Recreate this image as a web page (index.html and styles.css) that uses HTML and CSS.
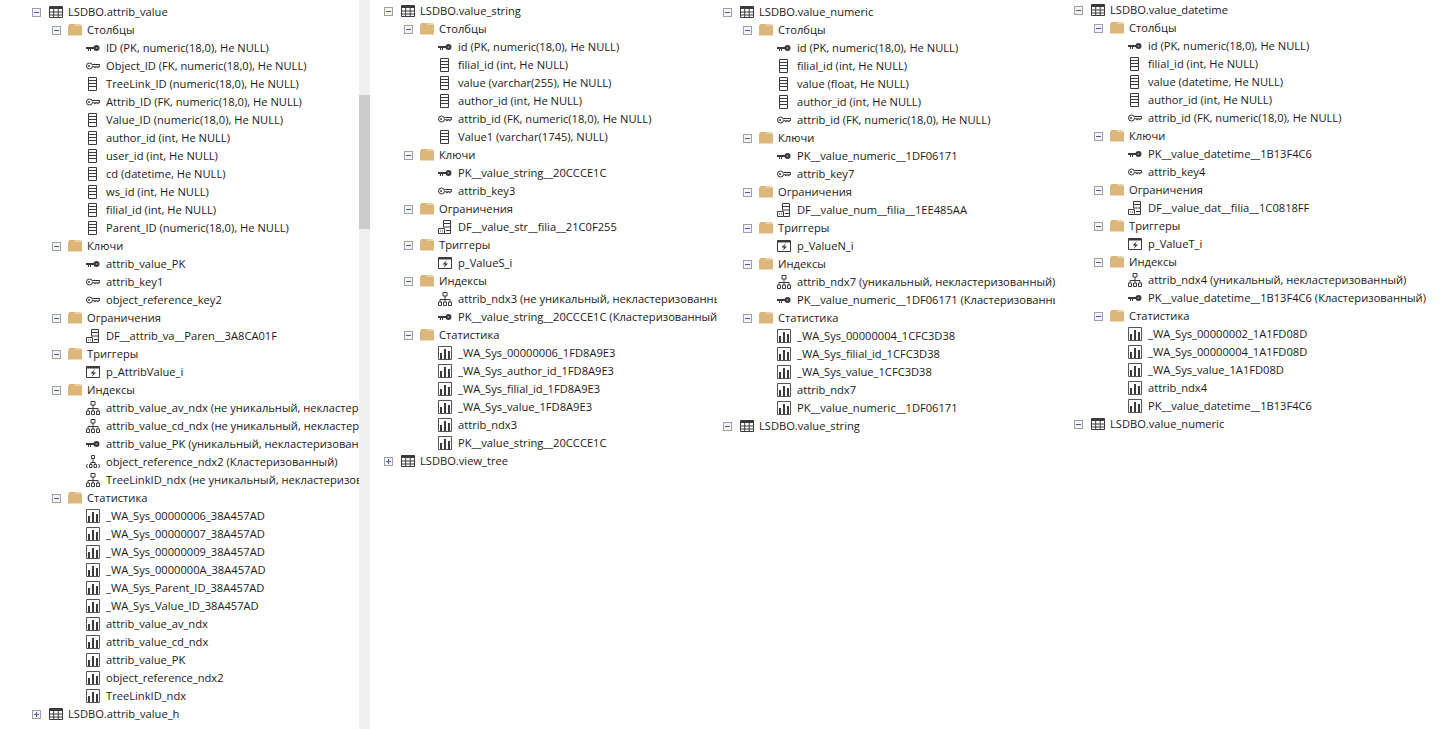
FILE: index.html
```html
<!DOCTYPE html>
<html lang="ru">
<head>
<meta charset="utf-8">
<title>Object Explorer</title>
<link rel="stylesheet" href="styles.css">
</head>
<body>
<svg class="sprite" width="0" height="0" aria-hidden="true">
  <symbol id="table" viewBox="0 0 14 14"><path d="M.5 1.5h13v11H.5z" fill="#fff" stroke="#3a3a3a"/><path d="M1 1h12v3H1z" fill="#3a3a3a"/><path d="M.5 7h13M.5 10h13M4.7 4v8M9.2 4v8" stroke="#3a3a3a" fill="none"/></symbol>
  <symbol id="folder" viewBox="0 0 14 14"><path d="M0 2.5h1V1h6v1.500h7V12.500H0z" fill="#dcb67a"/><path d="M7 1h6v1.500H7z" fill="#e9cf9f"/></symbol>
  <symbol id="pk" viewBox="0 0 14 14"><path d="M0 6h8v2H5v2H4V8H3v2H2V8H0z" fill="#3a3a3a"/><circle cx="10.500" cy="7" r="3" fill="#3a3a3a"/><circle cx="10.500" cy="7" r="1" fill="#8a8a8a"/></symbol>
  <symbol id="fk" viewBox="0 0 14 14"><circle cx="3.500" cy="7" r="3" fill="#fff" stroke="#2e2e2e"/><circle cx="3" cy="7" r=".9" fill="#2e2e2e"/><path d="M6.500 5.500h7.200v2.200h-1.500v1h-1v-1H9.500v1h-1v-1h-2" fill="#fff" stroke="#2e2e2e"/></symbol>
  <symbol id="col" viewBox="0 0 14 14"><path d="M2.500 .5h8v13h-8z" fill="#fff" stroke="#3a3a3a"/><path d="M3 3.500h7M3 6.500h7M3 9.500h7" stroke="#3a3a3a" fill="none"/></symbol>
  <symbol id="con" viewBox="0 0 14 14"><path d="M5.500 .5h7v13H7" fill="#fff" stroke="#3a3a3a"/><path d="M5.500 .5v7M6 3.500h6M6 7h6M8 10.500h4" stroke="#3a3a3a" fill="none"/><path d="M.5 8.500h6v5h-6z" fill="#fff" stroke="#3a3a3a"/><path d="M2 10.500h1v1H2zM4 10.500h1v1H4z" fill="#3a3a3a"/></symbol>
  <symbol id="trg" viewBox="0 0 14 14"><path d="M.5 1.500h13v11H.5z" fill="#fff" stroke="#3a3a3a"/><path d="M1 1h12v2.500H1z" fill="#3a3a3a"/><path d="M9 4 4.500 8.500h2.800L5.500 12 10 7.500H7.200z" fill="#2e2e2e"/></symbol>
  <symbol id="idx" viewBox="0 0 14 14"><path d="M5 .5h4v3.500H5zM.5 10h3v3.500h-3zM5.500 10h3v3.500h-3zM10.500 10h3v3.500h-3z" fill="#fff" stroke="#3a3a3a"/><path d="M7 4v6M2 10V7.500h10V10" stroke="#3a3a3a" fill="none"/></symbol>
  <symbol id="cidx" viewBox="0 0 14 14"><path d="M5.500 .5h3v3h-3zM3.500 9.500h2.500v3H3.500zM8 9.500h2.500v3H8z" fill="#fff" stroke="#3a3a3a"/><path d="M7 3.500v4M4.800 9.500V7.500h4.400v2" stroke="#3a3a3a" fill="none"/><path d="M1.500 9c-1.200 1.300-1.200 2.700 0 4M12.500 9c1.200 1.300 1.200 2.700 0 4" stroke="#3a3a3a" fill="none"/></symbol>
  <symbol id="stat" viewBox="0 0 14 14"><path d="M.5 .5h13v13H.5z" fill="#fff" stroke="#555"/><path d="M2 7h2v6H2zM6 3h2v10H6zM10 5h2v8h-2z" fill="#3a3a3a"/></symbol>
</svg>

<main class="explorer">
<section class="pane pane-a">
  <div class="tree">
    <div class="row l1"><i class="exp minus"></i><svg class="ico"><use href="#table"/></svg><span>LSDBO.attrib_value</span></div>
    <div class="row l2"><i class="exp minus"></i><svg class="ico"><use href="#folder"/></svg><span>Столбцы</span></div>
    <div class="row l3"><svg class="ico"><use href="#pk"/></svg><span>ID (PK, numeric(18,0), Не NULL)</span></div>
    <div class="row l3"><svg class="ico"><use href="#fk"/></svg><span>Object_ID (FK, numeric(18,0), Не NULL)</span></div>
    <div class="row l3"><svg class="ico"><use href="#col"/></svg><span>TreeLink_ID (numeric(18,0), Не NULL)</span></div>
    <div class="row l3"><svg class="ico"><use href="#fk"/></svg><span>Attrib_ID (FK, numeric(18,0), Не NULL)</span></div>
    <div class="row l3"><svg class="ico"><use href="#col"/></svg><span>Value_ID (numeric(18,0), Не NULL)</span></div>
    <div class="row l3"><svg class="ico"><use href="#col"/></svg><span>author_id (int, Не NULL)</span></div>
    <div class="row l3"><svg class="ico"><use href="#col"/></svg><span>user_id (int, Не NULL)</span></div>
    <div class="row l3"><svg class="ico"><use href="#col"/></svg><span>cd (datetime, Не NULL)</span></div>
    <div class="row l3"><svg class="ico"><use href="#col"/></svg><span>ws_id (int, Не NULL)</span></div>
    <div class="row l3"><svg class="ico"><use href="#col"/></svg><span>filial_id (int, Не NULL)</span></div>
    <div class="row l3"><svg class="ico"><use href="#col"/></svg><span>Parent_ID (numeric(18,0), Не NULL)</span></div>
    <div class="row l2"><i class="exp minus"></i><svg class="ico"><use href="#folder"/></svg><span>Ключи</span></div>
    <div class="row l3"><svg class="ico"><use href="#pk"/></svg><span>attrib_value_PK</span></div>
    <div class="row l3"><svg class="ico"><use href="#fk"/></svg><span>attrib_key1</span></div>
    <div class="row l3"><svg class="ico"><use href="#fk"/></svg><span>object_reference_key2</span></div>
    <div class="row l2"><i class="exp minus"></i><svg class="ico"><use href="#folder"/></svg><span>Ограничения</span></div>
    <div class="row l3"><svg class="ico"><use href="#con"/></svg><span>DF__attrib_va__Paren__3A8CA01F</span></div>
    <div class="row l2"><i class="exp minus"></i><svg class="ico"><use href="#folder"/></svg><span>Триггеры</span></div>
    <div class="row l3"><svg class="ico"><use href="#trg"/></svg><span>p_AttribValue_i</span></div>
    <div class="row l2"><i class="exp minus"></i><svg class="ico"><use href="#folder"/></svg><span>Индексы</span></div>
    <div class="row l3"><svg class="ico"><use href="#idx"/></svg><span>attrib_value_av_ndx (не уникальный, некластеризованный)</span></div>
    <div class="row l3"><svg class="ico"><use href="#idx"/></svg><span>attrib_value_cd_ndx (не уникальный, некластеризованный)</span></div>
    <div class="row l3"><svg class="ico"><use href="#pk"/></svg><span>attrib_value_PK (уникальный, некластеризованный)</span></div>
    <div class="row l3"><svg class="ico"><use href="#cidx"/></svg><span>object_reference_ndx2 (Кластеризованный)</span></div>
    <div class="row l3"><svg class="ico"><use href="#idx"/></svg><span>TreeLinkID_ndx (не уникальный, некластеризованный)</span></div>
    <div class="row l2"><i class="exp minus"></i><svg class="ico"><use href="#folder"/></svg><span>Статистика</span></div>
    <div class="row l3"><svg class="ico"><use href="#stat"/></svg><span>_WA_Sys_00000006_38A457AD</span></div>
    <div class="row l3"><svg class="ico"><use href="#stat"/></svg><span>_WA_Sys_00000007_38A457AD</span></div>
    <div class="row l3"><svg class="ico"><use href="#stat"/></svg><span>_WA_Sys_00000009_38A457AD</span></div>
    <div class="row l3"><svg class="ico"><use href="#stat"/></svg><span>_WA_Sys_0000000A_38A457AD</span></div>
    <div class="row l3"><svg class="ico"><use href="#stat"/></svg><span>_WA_Sys_Parent_ID_38A457AD</span></div>
    <div class="row l3"><svg class="ico"><use href="#stat"/></svg><span>_WA_Sys_Value_ID_38A457AD</span></div>
    <div class="row l3"><svg class="ico"><use href="#stat"/></svg><span>attrib_value_av_ndx</span></div>
    <div class="row l3"><svg class="ico"><use href="#stat"/></svg><span>attrib_value_cd_ndx</span></div>
    <div class="row l3"><svg class="ico"><use href="#stat"/></svg><span>attrib_value_PK</span></div>
    <div class="row l3"><svg class="ico"><use href="#stat"/></svg><span>object_reference_ndx2</span></div>
    <div class="row l3"><svg class="ico"><use href="#stat"/></svg><span>TreeLinkID_ndx</span></div>
    <div class="row l1"><i class="exp plus"></i><svg class="ico"><use href="#table"/></svg><span>LSDBO.attrib_value_h</span></div>
  </div>
  <div class="scrollbar"><div class="thumb"></div></div>
</section>

<section class="pane pane-b">
  <div class="tree">
    <div class="row l1"><i class="exp minus"></i><svg class="ico"><use href="#table"/></svg><span>LSDBO.value_string</span></div>
    <div class="row l2"><i class="exp minus"></i><svg class="ico"><use href="#folder"/></svg><span>Столбцы</span></div>
    <div class="row l3"><svg class="ico"><use href="#pk"/></svg><span>id (PK, numeric(18,0), Не NULL)</span></div>
    <div class="row l3"><svg class="ico"><use href="#col"/></svg><span>filial_id (int, Не NULL)</span></div>
    <div class="row l3"><svg class="ico"><use href="#col"/></svg><span>value (varchar(255), Не NULL)</span></div>
    <div class="row l3"><svg class="ico"><use href="#col"/></svg><span>author_id (int, Не NULL)</span></div>
    <div class="row l3"><svg class="ico"><use href="#fk"/></svg><span>attrib_id (FK, numeric(18,0), Не NULL)</span></div>
    <div class="row l3"><svg class="ico"><use href="#col"/></svg><span>Value1 (varchar(1745), NULL)</span></div>
    <div class="row l2"><i class="exp minus"></i><svg class="ico"><use href="#folder"/></svg><span>Ключи</span></div>
    <div class="row l3"><svg class="ico"><use href="#pk"/></svg><span>PK__value_string__20CCCE1C</span></div>
    <div class="row l3"><svg class="ico"><use href="#fk"/></svg><span>attrib_key3</span></div>
    <div class="row l2"><i class="exp minus"></i><svg class="ico"><use href="#folder"/></svg><span>Ограничения</span></div>
    <div class="row l3"><svg class="ico"><use href="#con"/></svg><span>DF__value_str__filia__21C0F255</span></div>
    <div class="row l2"><i class="exp minus"></i><svg class="ico"><use href="#folder"/></svg><span>Триггеры</span></div>
    <div class="row l3"><svg class="ico"><use href="#trg"/></svg><span>p_ValueS_i</span></div>
    <div class="row l2"><i class="exp minus"></i><svg class="ico"><use href="#folder"/></svg><span>Индексы</span></div>
    <div class="row l3"><svg class="ico"><use href="#idx"/></svg><span>attrib_ndx3 (не уникальный, некластеризованный)</span></div>
    <div class="row l3"><svg class="ico"><use href="#pk"/></svg><span>PK__value_string__20CCCE1C (Кластеризованный)</span></div>
    <div class="row l2"><i class="exp minus"></i><svg class="ico"><use href="#folder"/></svg><span>Статистика</span></div>
    <div class="row l3"><svg class="ico"><use href="#stat"/></svg><span>_WA_Sys_00000006_1FD8A9E3</span></div>
    <div class="row l3"><svg class="ico"><use href="#stat"/></svg><span>_WA_Sys_author_id_1FD8A9E3</span></div>
    <div class="row l3"><svg class="ico"><use href="#stat"/></svg><span>_WA_Sys_filial_id_1FD8A9E3</span></div>
    <div class="row l3"><svg class="ico"><use href="#stat"/></svg><span>_WA_Sys_value_1FD8A9E3</span></div>
    <div class="row l3"><svg class="ico"><use href="#stat"/></svg><span>attrib_ndx3</span></div>
    <div class="row l3"><svg class="ico"><use href="#stat"/></svg><span>PK__value_string__20CCCE1C</span></div>
    <div class="row l1"><i class="exp plus"></i><svg class="ico"><use href="#table"/></svg><span>LSDBO.view_tree</span></div>
  </div>
</section>

<section class="pane pane-c">
  <div class="tree">
    <div class="row l1"><i class="exp minus"></i><svg class="ico"><use href="#table"/></svg><span>LSDBO.value_numeric</span></div>
    <div class="row l2"><i class="exp minus"></i><svg class="ico"><use href="#folder"/></svg><span>Столбцы</span></div>
    <div class="row l3"><svg class="ico"><use href="#pk"/></svg><span>id (PK, numeric(18,0), Не NULL)</span></div>
    <div class="row l3"><svg class="ico"><use href="#col"/></svg><span>filial_id (int, Не NULL)</span></div>
    <div class="row l3"><svg class="ico"><use href="#col"/></svg><span>value (float, Не NULL)</span></div>
    <div class="row l3"><svg class="ico"><use href="#col"/></svg><span>author_id (int, Не NULL)</span></div>
    <div class="row l3"><svg class="ico"><use href="#fk"/></svg><span>attrib_id (FK, numeric(18,0), Не NULL)</span></div>
    <div class="row l2"><i class="exp minus"></i><svg class="ico"><use href="#folder"/></svg><span>Ключи</span></div>
    <div class="row l3"><svg class="ico"><use href="#pk"/></svg><span>PK__value_numeric__1DF06171</span></div>
    <div class="row l3"><svg class="ico"><use href="#fk"/></svg><span>attrib_key7</span></div>
    <div class="row l2"><i class="exp minus"></i><svg class="ico"><use href="#folder"/></svg><span>Ограничения</span></div>
    <div class="row l3"><svg class="ico"><use href="#con"/></svg><span>DF__value_num__filia__1EE485AA</span></div>
    <div class="row l2"><i class="exp minus"></i><svg class="ico"><use href="#folder"/></svg><span>Триггеры</span></div>
    <div class="row l3"><svg class="ico"><use href="#trg"/></svg><span>p_ValueN_i</span></div>
    <div class="row l2"><i class="exp minus"></i><svg class="ico"><use href="#folder"/></svg><span>Индексы</span></div>
    <div class="row l3"><svg class="ico"><use href="#idx"/></svg><span>attrib_ndx7 (уникальный, некластеризованный)</span></div>
    <div class="row l3"><svg class="ico"><use href="#pk"/></svg><span>PK__value_numeric__1DF06171 (Кластеризованный)</span></div>
    <div class="row l2"><i class="exp minus"></i><svg class="ico"><use href="#folder"/></svg><span>Статистика</span></div>
    <div class="row l3"><svg class="ico"><use href="#stat"/></svg><span>_WA_Sys_00000004_1CFC3D38</span></div>
    <div class="row l3"><svg class="ico"><use href="#stat"/></svg><span>_WA_Sys_filial_id_1CFC3D38</span></div>
    <div class="row l3"><svg class="ico"><use href="#stat"/></svg><span>_WA_Sys_value_1CFC3D38</span></div>
    <div class="row l3"><svg class="ico"><use href="#stat"/></svg><span>attrib_ndx7</span></div>
    <div class="row l3"><svg class="ico"><use href="#stat"/></svg><span>PK__value_numeric__1DF06171</span></div>
    <div class="row l1"><i class="exp minus"></i><svg class="ico"><use href="#table"/></svg><span>LSDBO.value_string</span></div>
  </div>
</section>

<section class="pane pane-d">
  <div class="tree">
    <div class="row l1"><i class="exp minus"></i><svg class="ico"><use href="#table"/></svg><span>LSDBO.value_datetime</span></div>
    <div class="row l2"><i class="exp minus"></i><svg class="ico"><use href="#folder"/></svg><span>Столбцы</span></div>
    <div class="row l3"><svg class="ico"><use href="#pk"/></svg><span>id (PK, numeric(18,0), Не NULL)</span></div>
    <div class="row l3"><svg class="ico"><use href="#col"/></svg><span>filial_id (int, Не NULL)</span></div>
    <div class="row l3"><svg class="ico"><use href="#col"/></svg><span>value (datetime, Не NULL)</span></div>
    <div class="row l3"><svg class="ico"><use href="#col"/></svg><span>author_id (int, Не NULL)</span></div>
    <div class="row l3"><svg class="ico"><use href="#fk"/></svg><span>attrib_id (FK, numeric(18,0), Не NULL)</span></div>
    <div class="row l2"><i class="exp minus"></i><svg class="ico"><use href="#folder"/></svg><span>Ключи</span></div>
    <div class="row l3"><svg class="ico"><use href="#pk"/></svg><span>PK__value_datetime__1B13F4C6</span></div>
    <div class="row l3"><svg class="ico"><use href="#fk"/></svg><span>attrib_key4</span></div>
    <div class="row l2"><i class="exp minus"></i><svg class="ico"><use href="#folder"/></svg><span>Ограничения</span></div>
    <div class="row l3"><svg class="ico"><use href="#con"/></svg><span>DF__value_dat__filia__1C0818FF</span></div>
    <div class="row l2"><i class="exp minus"></i><svg class="ico"><use href="#folder"/></svg><span>Триггеры</span></div>
    <div class="row l3"><svg class="ico"><use href="#trg"/></svg><span>p_ValueT_i</span></div>
    <div class="row l2"><i class="exp minus"></i><svg class="ico"><use href="#folder"/></svg><span>Индексы</span></div>
    <div class="row l3"><svg class="ico"><use href="#idx"/></svg><span>attrib_ndx4 (уникальный, некластеризованный)</span></div>
    <div class="row l3"><svg class="ico"><use href="#pk"/></svg><span>PK__value_datetime__1B13F4C6 (Кластеризованный)</span></div>
    <div class="row l2"><i class="exp minus"></i><svg class="ico"><use href="#folder"/></svg><span>Статистика</span></div>
    <div class="row l3"><svg class="ico"><use href="#stat"/></svg><span>_WA_Sys_00000002_1A1FD08D</span></div>
    <div class="row l3"><svg class="ico"><use href="#stat"/></svg><span>_WA_Sys_00000004_1A1FD08D</span></div>
    <div class="row l3"><svg class="ico"><use href="#stat"/></svg><span>_WA_Sys_value_1A1FD08D</span></div>
    <div class="row l3"><svg class="ico"><use href="#stat"/></svg><span>attrib_ndx4</span></div>
    <div class="row l3"><svg class="ico"><use href="#stat"/></svg><span>PK__value_datetime__1B13F4C6</span></div>
    <div class="row l1"><i class="exp minus"></i><svg class="ico"><use href="#table"/></svg><span>LSDBO.value_numeric</span></div>
  </div>
</section>
</main>
</body>
</html>
```

FILE: styles.css
```css
* { box-sizing: border-box; }
html, body { margin: 0; height: 729px; overflow: hidden; background: #fff; }
.sprite { display: block; height: 0; }
.explorer {
  display: flex;
  height: 729px;
  font-family: "Open Sans", "Noto Sans", sans-serif;
  font-size: 11.15px;
  color: #1a1a1a;
}
.pane { display: flex; overflow: hidden; height: 729px; flex: none; }
.tree { flex: 1; overflow: hidden; min-width: 0; }
.pane-a { width: 370px; padding-left: 32px; }
.pane-a .tree { padding-top: 3px; height: 729px; }
.pane-b { width: 347px; padding: 2px 0 0 14px; }
.pane-c { width: 338px; padding: 3px 0 0 6px; }
.pane-d { width: 397px; padding: 1px 0 0 19px; }
.scrollbar { flex: none; width: 11px; height: 729px; background: #f0f0f0; padding-top: 95px; }
.thumb { height: 134px; background: #cdcdcd; }
.row { display: flex; align-items: center; height: 18px; white-space: nowrap; }
.row span { padding-bottom: 2px; }
.row.l2 { padding-left: 20px; }
.row.l3 { padding-left: 54px; }
.exp {
  position: relative;
  flex: none;
  display: block;
  width: 9px;
  height: 9px;
  border: 1px solid #a0a0a0;
  background: #f6f6f6;
}
.exp::before { content: ""; position: absolute; left: 1px; top: 3px; width: 5px; height: 1px; background: #3c5fb0; }
.plus::after { content: ""; position: absolute; left: 3px; top: 1px; width: 1px; height: 5px; background: #3c5fb0; }
.l1 .exp { margin-right: 8px; }
.l2 .exp { margin-right: 7px; }
.ico { flex: none; width: 14px; height: 14px; margin-right: 5px; overflow: visible; }
.l3 .ico { margin-right: 6px; }
```
